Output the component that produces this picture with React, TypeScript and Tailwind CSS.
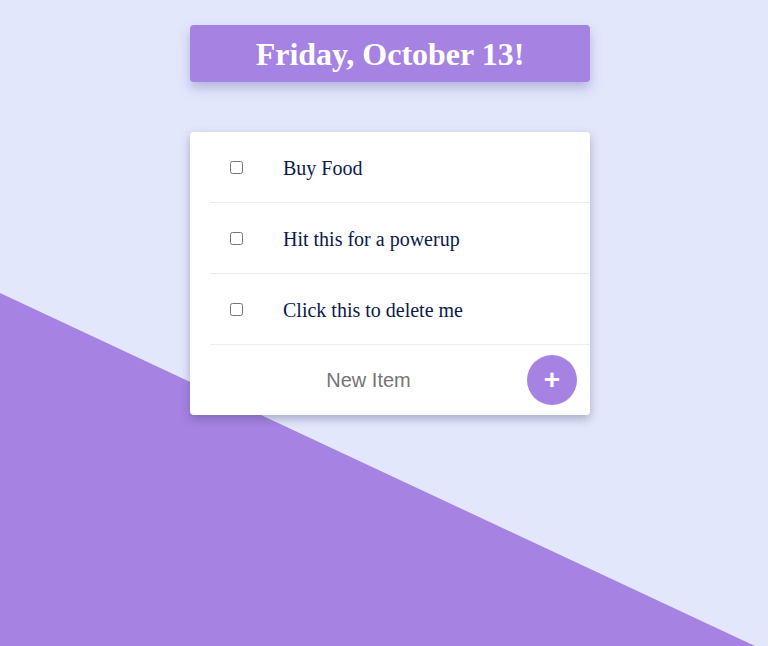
import { useState } from 'react';

const initialItems = ['Buy Food', 'Hit this for a powerup', 'Click this to delete me'];

const App = () => {
  const [items, setItems] = useState<string[]>(initialItems);
  const [draft, setDraft] = useState('');

  const addItem = () => {
    if (!draft.trim()) return;
    setItems([...items, draft.trim()]);
    setDraft('');
  };

  return (
    <div className="relative min-h-[646px] w-full overflow-hidden bg-[#e3e7fc] font-['Liberation_Serif',serif]">
      {/* Diagonal backdrop */}
      <div className="absolute inset-0 bg-[#a683e3] [clip-path:polygon(0_293px,755px_646px,0_646px)]" />

      <div className="relative flex flex-col items-center pl-[12px] pt-[25px]">
        {/* Date header */}
        <div className="flex h-[57px] w-[400px] items-center justify-center rounded bg-[#a683e3] shadow-[0_6px_12px_rgba(90,90,160,0.35)]">
          <h1 className="text-[32px] font-bold leading-none text-white">Friday, October 13!</h1>
        </div>

        {/* Todo card */}
        <div className="mt-[50px] w-[400px] rounded bg-white shadow-[0_4px_10px_rgba(60,60,100,0.35)]">
          {items.map((item) => (
            <div key={item} className="ml-[20px] flex h-[71px] items-center border-b border-[#ececec]">
              <input type="checkbox" className="ml-[20px] h-[13px] w-[13px]" />
              <span className="ml-[40px] pt-[2px] text-[20px] text-[#0a1a4a]">{item}</span>
            </div>
          ))}
          <div className="ml-[20px] flex h-[70px] items-center">
            <input
              value={draft}
              onChange={(e) => setDraft(e.target.value)}
              placeholder="New Item"
              className="h-[40px] flex-1 bg-transparent text-center font-['Liberation_Sans',Arial,sans-serif] text-[20px] text-[#333] outline-none placeholder:text-[#757575]"
            />
            <button
              onClick={addItem}
              className="mr-[13px] flex h-[50px] w-[50px] items-center justify-center rounded-full bg-[#a683e3] font-['Liberation_Sans',Arial,sans-serif] text-[28px] font-bold leading-none text-white"
            >
              +
            </button>
          </div>
        </div>
      </div>
    </div>
  );
};

export default App;
